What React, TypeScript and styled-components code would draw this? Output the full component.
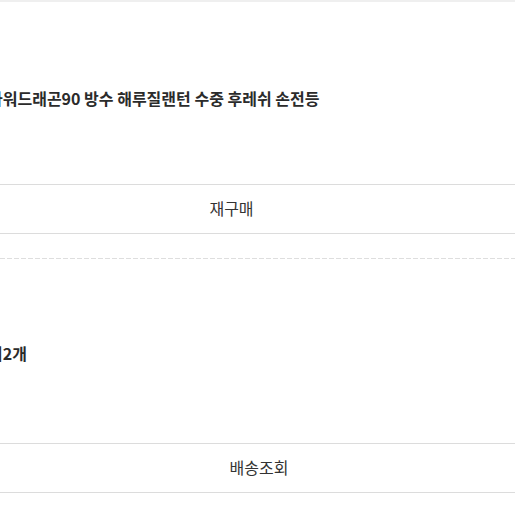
import React from "react";
import styled, { createGlobalStyle } from "styled-components";

const GlobalStyle = createGlobalStyle`
  html, body { margin: 0; padding: 0; background: #fff; }
  body { font-family: "Noto Sans CJK KR", "Noto Sans", sans-serif; }
  * { box-sizing: border-box; }
`;

const Page = styled.div`
  width: 515px;
  height: 515px;
  overflow: hidden;
  border-top: 2px solid #efefef;
  display: flex;
  flex-direction: column;
`;

const Order = styled.section`
  display: flex;
  flex-direction: column;
`;

const Info = styled.div<{ $top: number; $height: number }>`
  height: ${(p) => p.$height}px;
  padding-top: ${(p) => p.$top}px;
  display: flex;
  align-items: center;
`;

const Title = styled.div`
  margin-left: -12px;
  font-size: 16px;
  line-height: 22px;
  font-weight: 600;
  color: #2b2b2b;
  white-space: nowrap;
`;

const ActionButton = styled.button<{ $shift: number }>`
  width: 100%;
  height: 50px;
  border: none;
  border-top: 1px solid #dcdcdc;
  border-bottom: 1px solid #dcdcdc;
  background: #fff;
  font-family: "Noto Sans CJK KR", "Noto Sans", sans-serif;
  font-size: 16px;
  color: #333;
  display: flex;
  align-items: center;
  justify-content: center;
  padding: 0 ${(p) => (p.$shift < 0 ? -p.$shift * 2 : 0)}px 2px
    ${(p) => (p.$shift > 0 ? p.$shift * 2 : 0)}px;
`;

const Divider = styled.div`
  margin-top: 24px;
  height: 1px;
  background-image: repeating-linear-gradient(
    to right,
    #dedede 0 5px,
    transparent 5px 7px
  );
`;

export default function App() {
  return (
    <>
      <GlobalStyle />
      <Page>
        <Order>
          <Info $top={9} $height={182}>
            <Title>파워드래곤90 방수 해루질랜턴 수중 후레쉬 손전등</Title>
          </Info>
          <ActionButton $shift={-26}>재구매</ActionButton>
        </Order>
        <Divider />
        <Order>
          <Info $top={4} $height={184}>
            <Title>외2개</Title>
          </Info>
          <ActionButton $shift={1.5}>배송조회</ActionButton>
        </Order>
      </Page>
    </>
  );
}
